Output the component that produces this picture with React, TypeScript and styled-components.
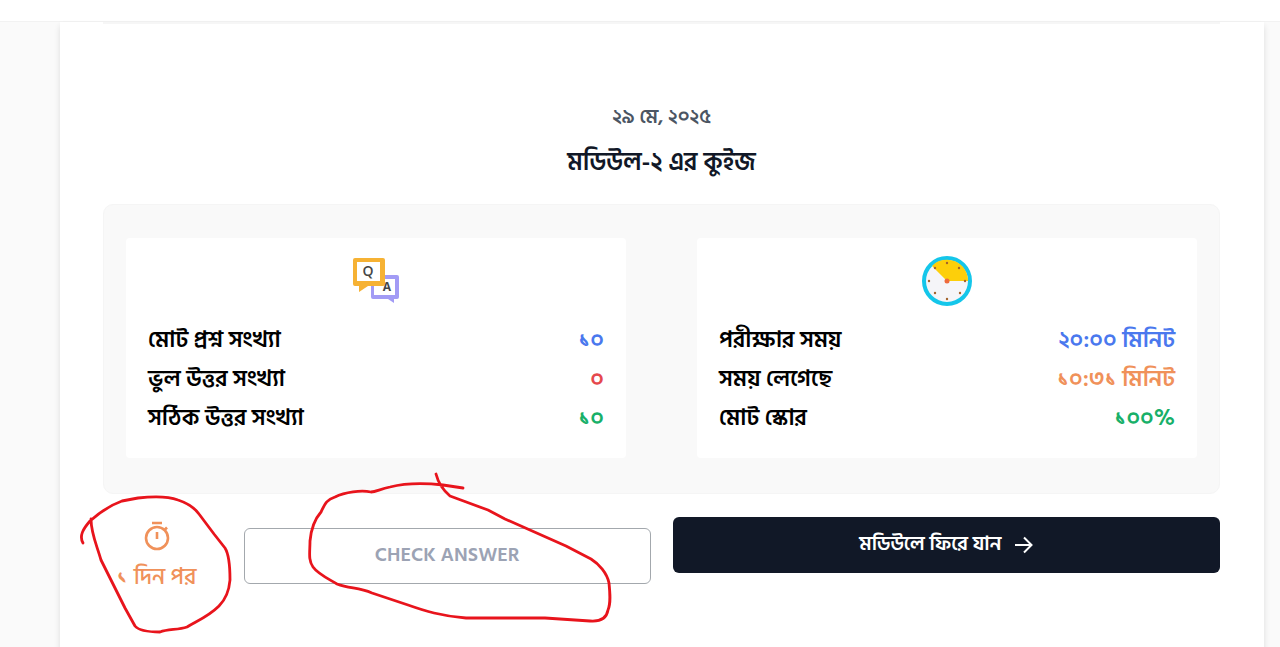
import React from "react";
import styled, { createGlobalStyle } from "styled-components";

const GlobalStyle = createGlobalStyle`
  * { box-sizing: border-box; }
  body {
    margin: 0;
    background: #fafafa;
    color: #000;
    font-family: "Hind Siliguri", "Noto Sans Bengali", "Noto Sans", sans-serif;
  }
`;

const Page = styled.div`
  position: relative;
  min-height: 100vh;
  display: flex;
  flex-direction: column;
  overflow: hidden;
`;

const TopBar = styled.header`
  height: 22px;
  background: #fff;
  border-bottom: 1px solid #f2f2f2;
`;

const Sheet = styled.main`
  flex: 1;
  margin: 0 16px 0 60px;
  padding: 0 44px 62px 43px;
  background: #fff;
  box-shadow: 0 4px 6px rgba(0, 0, 0, 0.12);
`;

const Divider = styled.hr`
  height: 2px;
  margin: 0;
  border: 0;
  background: #f6f6f6;
`;

const Heading = styled.div`
  padding: 77px 0 21px;
  text-align: center;
`;

const DateText = styled.p`
  margin: 0;
  color: #4b5563;
  font-size: 20px;
  font-weight: 600;
  line-height: 32px;
`;

const Title = styled.h1`
  margin: 10px 0 0;
  color: #111827;
  font-size: 25px;
  font-weight: 600;
  line-height: 40px;
`;

const Panel = styled.section`
  display: grid;
  grid-template-columns: 1fr 1fr;
  gap: 71px;
  padding: 33px 22px 35px;
  background: #f9f9f9;
  border: 1px solid #f5f5f5;
  border-radius: 10px;
`;

const Card = styled.div`
  padding: 16px 22px 20px;
  background: #fff;
  border-radius: 4px;
  text-align: center;

  > svg { display: block; margin: 0 auto 15px; }
`;

const Stats = styled.table`
  width: 100%;
  border-collapse: collapse;
  font-size: 23px;
  font-weight: 600;
  line-height: 39px;
`;

const Label = styled.th`
  padding: 0;
  text-align: left;
  font-weight: 600;
`;

const Value = styled.td<{ $color: string }>`
  padding: 0;
  text-align: right;
  color: ${(p) => p.$color};
`;

const Actions = styled.div`
  display: grid;
  grid-template-columns: 1fr 1fr;
  align-items: start;
  gap: 22px;
  padding-top: 23px;
`;

const Review = styled.div`
  display: flex;
  align-items: flex-start;
  gap: 34px;
`;

const Countdown = styled.div`
  width: 107px;
  color: #f0915a;
  font-size: 23px;
  font-weight: 500;
  line-height: 32px;
  text-align: center;

  svg { display: block; margin: 3px auto 9px; }
`;

const Button = styled.button`
  display: flex;
  align-items: center;
  justify-content: center;
  gap: 14px;
  flex: 1;
  height: 56px;
  padding-bottom: 4px;
  border-radius: 6px;
  font-family: inherit;
  font-size: 20px;
  font-weight: 600;
  line-height: 28px;
`;

const CheckButton = styled(Button)`
  margin-top: 11px;
  background: #fff;
  border: 1px solid #a3a8ad;
  color: #9ca3b4;
`;

const BackButton = styled(Button)`
  background: #111827;
  border: 0;
  color: #fff;
`;

const Marks = styled.svg`
  position: absolute;
  top: 0;
  left: 0;
  pointer-events: none;
`;

const QaIcon = () => (
  <svg width="52" height="52" viewBox="0 0 52 52" aria-hidden="true">
    <path d="M22 21h25q2 0 2 2v20q0 2-2 2h-3v4l-6-4H23q-2 0-2-2V23z" fill="#a29bf5" />
    <path d="M24 25h21v16H24z" fill="#fff" />
    <path d="M5 4h28q2 0 2 2v24q0 2-2 2H18l-9 6v-6H5q-2 0-2-2V6q0-2 2-2z" fill="#f6b234" />
    <path d="M7 8h23v19H7z" fill="#fff" />
    <text x="18" y="22" textAnchor="middle" fontFamily="Open Sans" fontSize="14" fontWeight="600" fill="#454545">Q</text>
    <text x="37" y="37" textAnchor="middle" fontFamily="Open Sans" fontSize="12" fontWeight="700" fill="#454545">A</text>
  </svg>
);

const ClockIcon = () => (
  <svg width="52" height="52" viewBox="0 0 52 52" aria-hidden="true">
    <circle cx="26" cy="27" r="23" fill="#f5f5f8" stroke="#14c6ea" strokeWidth="4" />
    <path d="M26 27H47A21 21 0 0 0 11 12z" fill="#fdcf0a" />
    <g fill="#a3632c">
      {[[26, 9], [38, 14], [44, 27], [39, 39], [26, 45], [14, 39], [8, 27], [14, 14]].map(([x, y]) => (
        <circle key={`${x}-${y}`} cx={x} cy={y} r="1.2" />
      ))}
    </g>
    <circle cx="26" cy="27" r="2.5" fill="#ee6a3c" />
  </svg>
);

const TimerIcon = () => (
  <svg width="32" height="32" viewBox="0 0 32 32" fill="none" stroke="currentColor" strokeWidth="2.6" aria-hidden="true">
    <circle cx="16" cy="18" r="11" />
    <path d="M11 3h10M16 12v7M23.5 10l2.5-2.500" />
  </svg>
);

const ArrowIcon = () => (
  <svg width="18" height="20" viewBox="0 0 18 20" fill="none" stroke="currentColor" strokeWidth="2" aria-hidden="true">
    <path d="M0 11h16M9 3.5l7.5 7.5-7.500 7.5" />
  </svg>
);

type Row = { label: string; value: string; color: string };

const answers: Row[] = [
  { label: "মোট প্রশ্ন সংখ্যা", value: "১০", color: "#4a78ee" },
  { label: "ভুল উত্তর সংখ্যা", value: "০", color: "#e5484d" },
  { label: "সঠিক উত্তর সংখ্যা", value: "১০", color: "#18b069" },
];

const timing: Row[] = [
  { label: "পরীক্ষার সময়", value: "২০:০০ মিনিট", color: "#4a78ee" },
  { label: "সময় লেগেছে", value: "১০:৩১ মিনিট", color: "#f0915a" },
  { label: "মোট স্কোর", value: "১০০%", color: "#18b069" },
];

const StatTable = ({ rows }: { rows: Row[] }) => (
  <Stats>
    <tbody>
      {rows.map((row) => (
        <tr key={row.label}>
          <Label scope="row">{row.label}</Label>
          <Value $color={row.color}>{row.value}</Value>
        </tr>
      ))}
    </tbody>
  </Stats>
);

export default function App() {
  return (
    <>
      <GlobalStyle />
      <Page>
        <TopBar />
        <Sheet>
          <Divider />
          <Heading>
            <DateText>২৯ মে, ২০২৫</DateText>
            <Title>মডিউল-২ এর কুইজ</Title>
          </Heading>
          <Panel>
            <Card>
              <QaIcon />
              <StatTable rows={answers} />
            </Card>
            <Card>
              <ClockIcon />
              <StatTable rows={timing} />
            </Card>
          </Panel>
          <Actions>
            <Review>
              <Countdown>
                <TimerIcon />
                ১ দিন পর
              </Countdown>
              <CheckButton type="button">CHECK ANSWER</CheckButton>
            </Review>
            <BackButton type="button">
              মডিউলে ফিরে যান
              <ArrowIcon />
            </BackButton>
          </Actions>
        </Sheet>
        <Marks width="640" height="647" viewBox="0 0 640 647" fill="none" stroke="#e8141c" strokeWidth="2.8" strokeLinecap="round" strokeLinejoin="round" aria-hidden="true">
          <path d="M83 543C79 536 83 529 90 521C100 512 111 505 122 501L138 498C155 496 170 497 178 500C187 503 194 507 199 514L214 534L225 548C230 556 230 570 230 580C229 592 225 600 219 606C209 616 199 620 187 627C178 630 168 629 160 632C150 632 139 631 135 626L125 608L101 560C96 543 91 533 91 519" />
          <path d="M463 488L443 485C425 483 406 483 390 487C380 489 376 492 371 492C361 490 345 492 335 497C326 500 325 504 321 512C314 520 311 530 310 541C310 552 308 560 313 567C318 574 327 578 337 584C350 589 358 587 372 593L408 605C425 611 441 616 466 618L545 618L590 621C603 622 607 616 608 610C611 603 610 593 609 583C607 573 599 564 591 559L566 546L505 519L488 510L450 496C443 490 438 482 436 474" />
        </Marks>
      </Page>
    </>
  );
}
